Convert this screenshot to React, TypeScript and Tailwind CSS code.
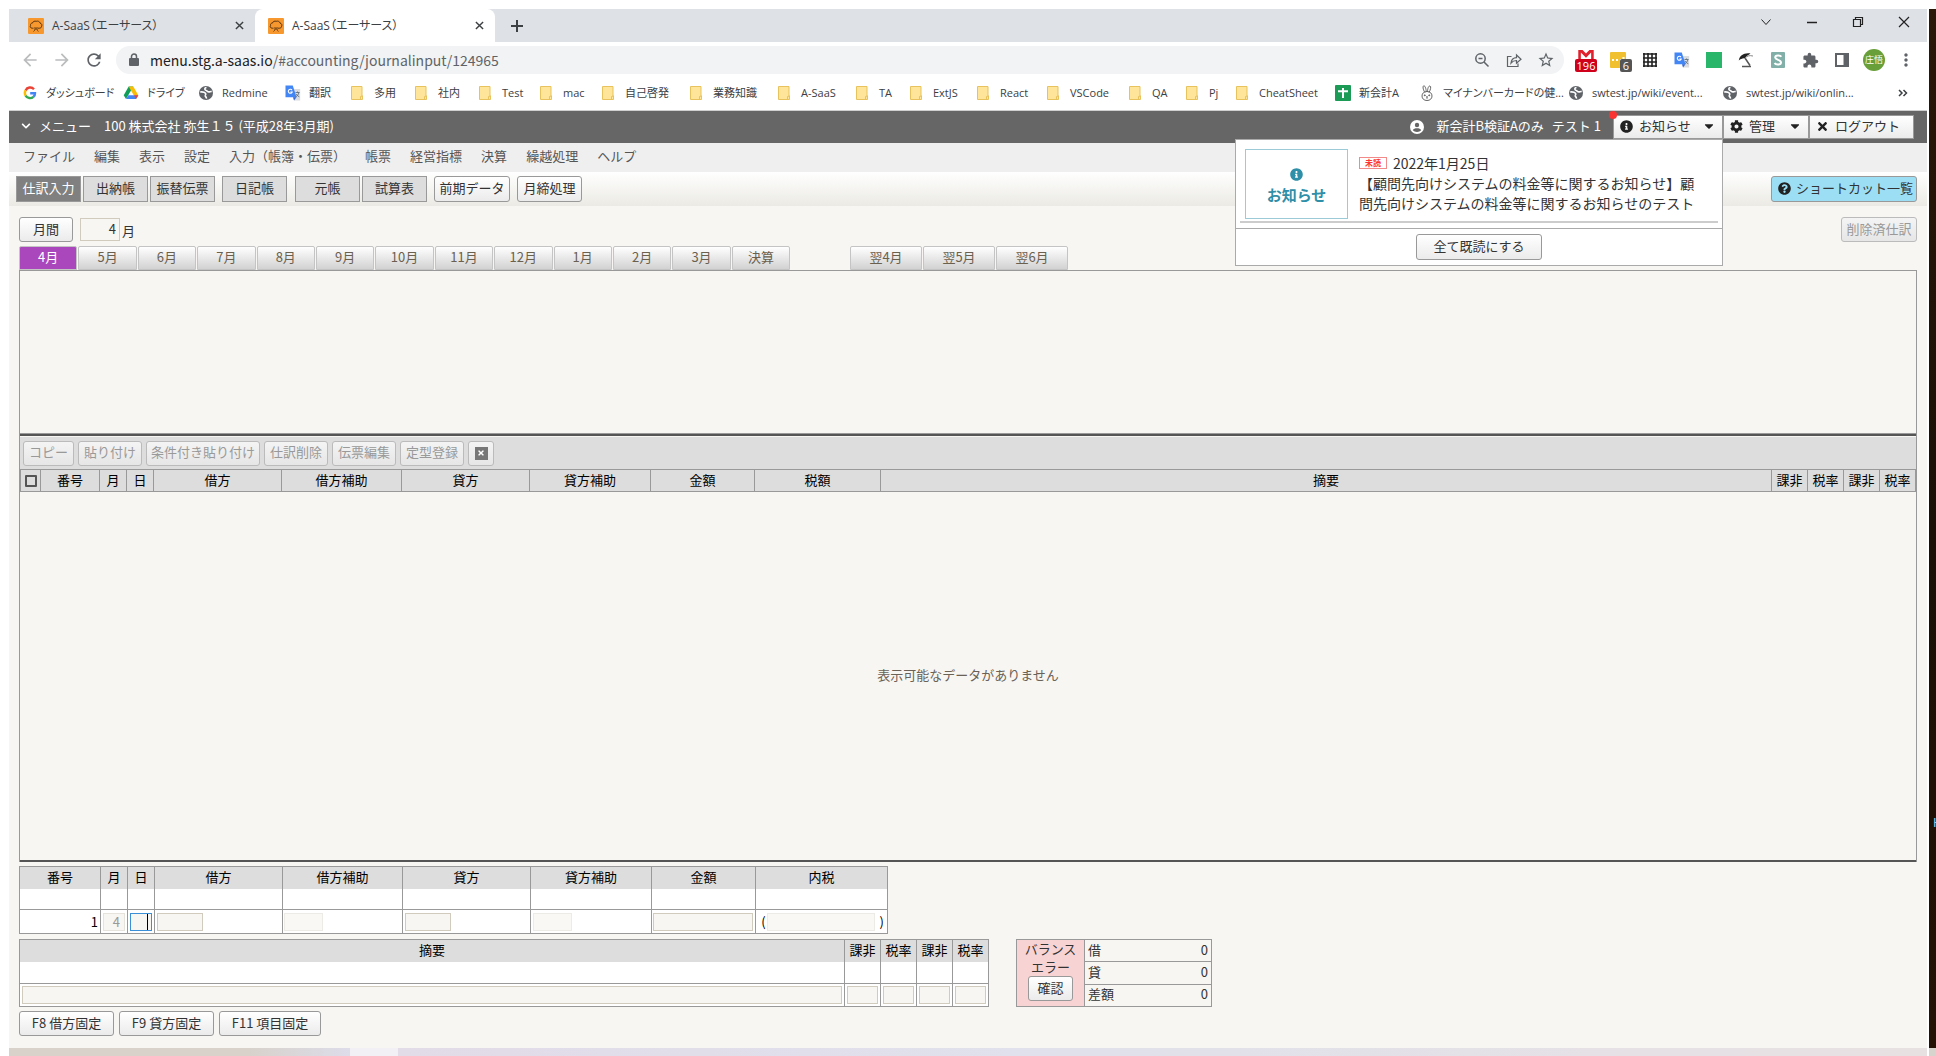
import type { ReactNode } from "react";
import { FaCaretDown, FaChevronDown, FaCog, FaInfoCircle, FaQuestionCircle, FaTimes } from "react-icons/fa";
import { MdArrowBack, MdArrowForward, MdMoreVert, MdRefresh, MdStarBorder } from "react-icons/md";

const appFont = "font-['Noto_Sans_CJK_JP',sans-serif]";
const chromeFont = "font-['Open_Sans','Noto_Sans_CJK_JP',sans-serif] [font-feature-settings:'palt']";

/* ---------- small drawings ---------- */

function TreeIcon() {
  return (
    <svg viewBox="0 0 16 16" className="size-4 shrink-0">
      <rect width="16" height="16" rx="1" fill="#f7982f" />
      <path d="M5.500 10.200H4.200C2.300 10.200 1.700 8.400 2.600 7.400 2.200 5.900 3.300 5 4.400 5.100 4.900 3.500 6.600 2.700 8.200 3.300 10 2.700 11.800 3.600 12 5.100c1.600.2 2.300 1.800 1.600 3.100.1 1.300-1 2-2.400 2H10" fill="none" stroke="#5a3510" strokeWidth="1" />
      <path d="M5.500 13.500c1.300-.8 1.600-2.300 1.500-4.500M10.300 13.500C9.200 12.500 9 11 9 9M7 11h2" fill="none" stroke="#5a3510" strokeWidth=".9" />
    </svg>
  );
}

function GoogleIcon() {
  return (
    <svg viewBox="0 0 16 16" className="size-4 shrink-0" fill="none" strokeWidth="2.4">
      <path d="M12 4.200A5.100 5.100 0 0 0 3.600 5.400" stroke="#ea4335" />
      <path d="M3.600 5.400a5.100 5.100 0 0 0 0 5.200" stroke="#fbbc05" />
      <path d="M3.600 10.600a5.100 5.100 0 0 0 7.800 1.200" stroke="#34a853" />
      <path d="M11.400 11.800A4.600 4.600 0 0 0 13 8.200H8.200" stroke="#4285f4" />
    </svg>
  );
}

function DriveIcon() {
  return (
    <svg viewBox="0 0 16 16" className="size-4 shrink-0">
      <path d="M5.700 1.500h4.600L8 5.500 3 14 .7 10.200z" fill="#0f9d58" />
      <path d="M5.700 1.500h4.600l5 8.700h-4.600z" fill="#fbbc05" />
      <path d="M5.300 10.200h10L13 14H3z" fill="#4285f4" />
      <path d="M12.900 10.200h2.400L13 14l-2-3.800z" fill="#ea4335" />
    </svg>
  );
}

function GlobeIcon() {
  return (
    <svg viewBox="0 0 16 16" className="size-4 shrink-0">
      <circle cx="8" cy="8" r="7" fill="#5f6368" />
      <path d="M8.500 2.500C6.500 2.800 6.300 4.600 7.800 5.200c1.500.5 1.500 1.800 3.200 1.700 1.100-.1 1.500-.6 2.700-.3M2.200 7c1.800-.2 4.200 0 5.300 1.200 1 1.200-.6 1.800-.2 2.900.4 1 1.300.9 1.100 2.600" fill="none" stroke="#fff" strokeWidth="1.600" />
    </svg>
  );
}

function TranslateIcon() {
  return (
    <svg viewBox="0 0 16 16" className="size-4 shrink-0">
      <path d="M6 4h9.200v11.500H9z" fill="#dadce0" />
      <path d="M.5.500h7.300l3.700 11.800H.500z" fill="#4285f4" />
      <path d="M8 12.300h3.500L9 15.500z" fill="#3367d6" />
      <path d="M7 5.200A2 2 0 1 0 7.200 7H5.400" fill="none" stroke="#fff" strokeWidth="1.100" />
      <path d="M10.500 7.500h4M12.500 6.500v1M13.800 7.500c-.3 2-1.300 3.300-3 4.300M11.300 9c.6 1.300 1.600 2.200 3 2.800" fill="none" stroke="#5f6f80" strokeWidth=".9" />
    </svg>
  );
}

function FolderIcon() {
  return (
    <svg viewBox="0 0 16 16" className="size-4 shrink-0">
      <path d="M1.500 1.500h10.500v9.500h.500v3.500H1.500z" fill="#fee599" stroke="#e8c25c" />
      <path d="M10.500 14.500v-3l2-.5" fill="none" stroke="#e8c25c" />
    </svg>
  );
}

function SheetIcon() {
  return (
    <svg viewBox="0 0 16 16" className="size-4 shrink-0">
      <rect width="16" height="16" rx="1" fill="#1c9b57" />
      <path d="M3 6.200h10M8 3v10" stroke="#fff" strokeWidth="2" />
    </svg>
  );
}

function RabbitIcon() {
  return (
    <svg viewBox="0 0 16 16" className="size-4 shrink-0" fill="none" stroke="#555" strokeWidth=".9">
      <path d="M6 7.500C4 5 3.400 1 4.800.800 6.300.700 7 4 7.300 6.500M8.500 6.500C8.600 3.500 9.500.700 11 1c1.400.3.500 4-1 6.500" />
      <path d="M8 6.500c3 0 5 1.800 5 4.500S11 15.500 8 15.500 3 13.700 3 11s2-4.500 5-4.500zM7 11.500l1 .8 1-.8M8 12.300v1.500" />
      <circle cx="5.800" cy="10.300" r=".5" fill="#555" />
      <circle cx="10.200" cy="10.300" r=".5" fill="#555" />
    </svg>
  );
}

function LockIcon() {
  return (
    <svg viewBox="0 0 12 14" className="h-[14px] w-3 shrink-0">
      <rect x="1" y="5" width="10" height="8" rx="1" fill="#5f6368" />
      <path d="M3.500 5.500V3.500a2.500 2.500 0 0 1 5 0v2" fill="none" stroke="#5f6368" strokeWidth="1.500" />
    </svg>
  );
}

function PuzzleIcon() {
  return (
    <svg viewBox="0 0 24 24" className="size-[17px]" fill="#5f6368">
      <path d="M20.500 11H19V7c0-1.100-.9-2-2-2h-4V3.500a2.500 2.500 0 0 0-5 0V5H4c-1.100 0-1.990.9-1.990 2v3.800H3.500c1.490 0 2.700 1.210 2.700 2.700s-1.210 2.700-2.700 2.700H2V20c0 1.100.9 2 2 2h3.800v-1.500c0-1.490 1.210-2.700 2.700-2.700s2.700 1.210 2.700 2.700V22H17c1.100 0 2-.9 2-2v-4h1.500a2.500 2.500 0 0 0 0-5z" />
    </svg>
  );
}

function UserIcon() {
  return (
    <svg viewBox="0 0 14 14" className="size-[14px]">
      <circle cx="7" cy="7" r="7" fill="#fff" />
      <circle cx="7" cy="5" r="2.200" fill="#666" />
      <path d="M2.800 10.300C3.500 8.800 5 8.300 7 8.300s3.500.5 4.200 2A5.500 5.500 0 0 1 7 12a5.500 5.500 0 0 1-4.200-1.700z" fill="#666" />
    </svg>
  );
}

/* ---------- browser ---------- */

const bookmarks: { label: string; icon: ReactNode; width: string }[] = [
  { label: "ダッシュボード", icon: <GoogleIcon />, width: "w-[101px]" },
  { label: "ドライブ", icon: <DriveIcon />, width: "w-[75px]" },
  { label: "Redmine", icon: <GlobeIcon />, width: "w-[87px]" },
  { label: "翻訳", icon: <TranslateIcon />, width: "w-[65px]" },
  { label: "多用", icon: <FolderIcon />, width: "w-16" },
  { label: "社内", icon: <FolderIcon />, width: "w-16" },
  { label: "Test", icon: <FolderIcon />, width: "w-[61px]" },
  { label: "mac", icon: <FolderIcon />, width: "w-[62px]" },
  { label: "自己啓発", icon: <FolderIcon />, width: "w-[88px]" },
  { label: "業務知識", icon: <FolderIcon />, width: "w-[88px]" },
  { label: "A-SaaS", icon: <FolderIcon />, width: "w-[78px]" },
  { label: "TA", icon: <FolderIcon />, width: "w-[54px]" },
  { label: "ExtJS", icon: <FolderIcon />, width: "w-[67px]" },
  { label: "React", icon: <FolderIcon />, width: "w-[70px]" },
  { label: "VSCode", icon: <FolderIcon />, width: "w-[82px]" },
  { label: "QA", icon: <FolderIcon />, width: "w-[57px]" },
  { label: "Pj", icon: <FolderIcon />, width: "w-[50px]" },
  { label: "CheatSheet", icon: <FolderIcon />, width: "w-[100px]" },
  { label: "新会計A", icon: <SheetIcon />, width: "w-[84px]" },
  { label: "マイナンバーカードの健...", icon: <RabbitIcon />, width: "w-[149px]" },
  { label: "swtest.jp/wiki/event...", icon: <GlobeIcon />, width: "w-[154px]" },
  { label: "swtest.jp/wiki/onlin...", icon: <GlobeIcon />, width: "w-[154px]" },
];

function BrowserTab({ active }: { active?: boolean }) {
  return (
    <div className={`flex h-full w-[240px] items-center pr-2 pl-[13px] ${active ? "rounded-t-lg bg-white" : ""}`}>
      <TreeIcon />
      <button className="ml-2 flex-1 text-left text-xs text-[#3c4043]">A-SaaS（エーサース）</button>
      <button aria-label="タブを閉じる" className="flex size-4 items-center justify-center">
        <svg viewBox="0 0 10 10" className="size-[9px]" stroke="#3c4043" strokeWidth="1.600"><path d="M1 1l8 8M9 1l-8 8" /></svg>
      </button>
    </div>
  );
}

function WindowButton({ label, children }: { label: string; children: ReactNode }) {
  return (
    <button aria-label={label} className="flex h-[26px] w-[46px] items-center justify-center">
      <svg viewBox="0 0 12 12" className="size-3" fill="none" stroke="#222">{children}</svg>
    </button>
  );
}

function ToolCell({ label, children }: { label: string; children: ReactNode }) {
  return (
    <button aria-label={label} className="relative flex h-7 w-8 items-center justify-center">
      {children}
    </button>
  );
}

function Browser() {
  return (
    <div className={chromeFont}>
      <div className="flex h-[33px] items-stretch bg-[#dee1e6]">
        <div className="flex pl-[6px]">
          <BrowserTab />
          <BrowserTab active />
        </div>
        <button aria-label="新しいタブ" className="ml-[14px] flex w-4 items-center justify-center">
          <svg viewBox="0 0 14 14" className="size-[14px]" stroke="#3c4043" strokeWidth="2"><path d="M7 1v12M1 7h12" /></svg>
        </button>
        <div className="ml-auto flex">
          <WindowButton label="タブを検索"><path d="M1.500 3.500L6 8.500l4.500-5" /></WindowButton>
          <WindowButton label="最小化"><path d="M1 6.500h10" strokeWidth="1.500" /></WindowButton>
          <WindowButton label="元に戻す"><path d="M1.500 3.500h7v7h-7zM3.500 3.500v-2h7v7h-2" strokeWidth="1.200" /></WindowButton>
          <WindowButton label="閉じる"><path d="M1 1l10 10M11 1L1 11" strokeWidth="1.200" /></WindowButton>
        </div>
      </div>

      <div className="flex h-9 items-center bg-white pl-[5px]">
        <ToolCell label="戻る"><MdArrowBack className="size-5 text-[#babcbe]" /></ToolCell>
        <ToolCell label="進む"><MdArrowForward className="size-5 text-[#babcbe]" /></ToolCell>
        <ToolCell label="再読み込み"><MdRefresh className="size-5 text-[#5f6368]" /></ToolCell>
        <div className="ml-[6px] flex h-7 flex-1 items-center rounded-full bg-[#f1f3f4] pr-[2px] pl-3">
          <LockIcon />
          <div className="ml-[10px] flex-1 font-['Noto_Sans_CJK_JP',sans-serif] text-sm text-[#5f6368]">
            <span className="text-[#202124]">menu.stg.a-saas.io</span>/#accounting/journalinput/124965
          </div>
          <ToolCell label="ズーム">
            <svg viewBox="0 0 16 16" className="size-4" fill="none" stroke="#5f6368" strokeWidth="1.500"><circle cx="6.500" cy="6.500" r="4.700" /><path d="M10 10l4.500 4.500M4.500 6.500h4" /></svg>
          </ToolCell>
          <ToolCell label="共有">
            <svg viewBox="0 0 16 16" className="size-4" fill="none" stroke="#5f6368" strokeWidth="1.200"><path d="M5.500 4.500H1.500v10h10.500v-3M5 11c.5-3.500 2.500-5.200 5.500-5.300V3l4.500 4.200-4.500 4V8.500C8 8.500 6.500 9.200 5 11z" /></svg>
          </ToolCell>
          <ToolCell label="ブックマーク"><MdStarBorder className="size-[18px] text-[#5f6368]" /></ToolCell>
        </div>
        <div className="flex pr-[5px] pl-[6px]">
          <ToolCell label="Gmail">
            <svg viewBox="0 0 18 14" className="absolute top-1 left-2 h-3 w-4"><rect width="18" height="14" fill="#e0202c" /><path d="M3 14V3l6 6 6-6v11zM5 0h8L9 4z" fill="#fff" /></svg>
            <span className="absolute top-[13px] left-[5px] h-[13px] w-[22px] rounded-[2px] bg-[#d0021b] text-center text-[11px] leading-[13px] text-white">196</span>
          </ToolCell>
          <ToolCell label="メモ">
            <svg viewBox="0 0 16 16" className="size-4"><rect width="16" height="16" rx="1" fill="#f0c030" /><path d="M2 8h2M6 8h2M10 8h2M13.500 5v4" stroke="#fff" strokeWidth="2" /></svg>
            <span className="absolute top-[13px] left-[18px] h-[13px] w-3 rounded-[2px] bg-[#555] text-center text-[11px] leading-[13px] text-white">6</span>
          </ToolCell>
          <ToolCell label="グリッド">
            <svg viewBox="0 0 14 14" className="size-[14px]"><rect width="14" height="14" rx="1" fill="#fff" /><path d="M1 0v14M5 0v14M9 0v14M13 0v14M0 1h14M0 5h14M0 9h14M0 13h14" stroke="#222" strokeWidth="1.600" /></svg>
          </ToolCell>
          <ToolCell label="翻訳"><TranslateIcon /></ToolCell>
          <ToolCell label="緑の拡張機能"><span className="size-4 bg-[#29b66b]" /></ToolCell>
          <ToolCell label="傘">
            <svg viewBox="0 0 16 16" className="size-4"><path d="M.8 8.500C1.500 3.500 6 .5 12.500 1.500 10 3 8 4.500 7 6.300 5 5.800 2.500 6.800.800 8.500z" fill="#222" /><path d="M7 6l5 7.500M4 14.500h9" stroke="#555" strokeWidth="1.500" /><path d="M7 6.300C9 4 11 3 15 4" stroke="#888" fill="none" /></svg>
          </ToolCell>
          <ToolCell label="S">
            <svg viewBox="0 0 14 16" className="h-4 w-[14px]"><rect width="14" height="16" rx="1" fill="#82b0a8" /><path d="M10.300 4.800C9.300 3 4.200 3 4.200 5.500S10 7.700 10 10.400 4.600 13 3.600 11" fill="none" stroke="#fff" strokeWidth="2" /></svg>
          </ToolCell>
          <ToolCell label="拡張機能"><PuzzleIcon /></ToolCell>
          <ToolCell label="サイドパネル">
            <svg viewBox="0 0 14 14" className="size-[14px]"><path d="M1 1h12v12H1z" fill="none" stroke="#5f6368" strokeWidth="2" /><path d="M8.500 1H13v12H8.500z" fill="#5f6368" /></svg>
          </ToolCell>
          <ToolCell label="プロフィール">
            <span className="size-[22px] rounded-full bg-[#689f38] text-center text-[9px] leading-[22px] text-white">庄悟</span>
          </ToolCell>
          <ToolCell label="設定"><MdMoreVert className="size-5 text-[#5f6368]" /></ToolCell>
        </div>
      </div>

      <nav className="flex h-[33px] items-center border-b border-[#d0d0d0] bg-white pr-4 pb-[2px] pl-[13px] text-[11px] text-[#3c4043]">
        {bookmarks.map((b) => (
          <a key={b.label} href="#" className={`flex shrink-0 items-center gap-2 whitespace-nowrap ${b.width}`}>
            {b.icon}
            {b.label}
          </a>
        ))}
        <button aria-label="その他のブックマーク" className="ml-auto flex size-4 items-center justify-center">
          <svg viewBox="0 0 10 8" className="h-2 w-[10px]" fill="none" stroke="#3c4043" strokeWidth="1.500"><path d="M1 1l3 3-3 3M5.500 1l3 3-3 3" /></svg>
        </button>
      </nav>
    </div>
  );
}

/* ---------- application ---------- */

const raised = "border border-[#999] bg-linear-to-b from-white to-[#ebebeb] text-[#333] whitespace-nowrap pb-[2px]";
const disabledLook = "border border-[#bbb] bg-linear-to-b from-[#f4f4f4] to-[#e6e6e6] text-[#999] whitespace-nowrap rounded-[3px]";

function TopMenuButton({ icon, label, caret, className }: { icon: ReactNode; label: string; caret?: boolean; className: string }) {
  return (
    <button className={`flex h-6 items-center ${raised} px-[6px] ${className}`}>
      {icon}
      <span className="ml-[6px]">{label}</span>
      {caret && <FaCaretDown className="ml-auto size-[14px] text-[#222]" />}
    </button>
  );
}

function NoticePopup() {
  return (
    <section aria-label="お知らせ" className="absolute top-6 right-0 z-10 w-[488px] border border-[#aaa] bg-white text-[#333]">
      <div className="mx-1 mt-[9px] mb-[5px] flex border-b-2 border-[#ccc] pb-[2px] pl-[5px]">
        <div className="flex h-[70px] w-[103px] shrink-0 flex-col items-center justify-center border border-[#9ccad6] pt-1 font-bold text-[#2f8fa8]">
          <FaInfoCircle className="size-[13px]" />
          <span className="mt-1 text-[15px] leading-5">お知らせ</span>
        </div>
        <div className="ml-[11px] w-[348px] text-sm leading-5">
          <p className="mt-1 flex items-center">
            <span className="mr-[6px] w-7 border border-[#f28a8a] text-center text-[8px] leading-[10px] font-bold text-[#f33]">未読</span>
            2022年1月25日
          </p>
          <p>【顧問先向けシステムの料金等に関するお知らせ】顧問先向けシステムの料金等に関するお知らせのテスト</p>
        </div>
      </div>
      <div className="flex justify-center border-t border-[#aaa] py-[5px]">
        <button className={`h-[26px] w-[126px] rounded-[3px] ${raised}`}>全て既読にする</button>
      </div>
    </section>
  );
}

function AppHeader() {
  return (
    <header className="flex h-8 items-center bg-[#666] pr-[13px] pl-3 text-white">
      <button className="flex items-center gap-2 pb-[2px]">
        <FaChevronDown className="size-[10px]" />
        メニュー
      </button>
      <h1 className="ml-[13px] pb-[2px]">100 株式会社 弥生１５ (平成28年3月期)</h1>
      <div className="ml-auto flex items-center">
        <UserIcon />
        <span className="ml-3 pb-[2px]">新会計B検証Aのみ</span>
        <span className="ml-2 mr-3 pb-[2px]">テスト 1</span>
        <div className="relative">
          <TopMenuButton icon={<FaInfoCircle className="size-[13px] text-[#222]" />} label="お知らせ" caret className="w-[110px]" />
          <span className="absolute -top-1 -left-1 size-2 rounded-full bg-[#fa3333]" />
          <NoticePopup />
        </div>
        <TopMenuButton icon={<FaCog className="size-[13px] text-[#222]" />} label="管理" caret className="w-[86px]" />
        <TopMenuButton icon={<FaTimes className="size-[13px] text-[#222]" />} label="ログアウト" className="w-[105px]" />
      </div>
    </header>
  );
}

const menus = ["ファイル", "編集", "表示", "設定", "入力（帳簿・伝票）", "帳票", "経営指標", "決算", "繰越処理", "ヘルプ"];

const flatButton = "h-[26px] w-[65px] border border-[#999] whitespace-nowrap pb-[2px]";

function Toolbar() {
  return (
    <div className="flex h-[34px] items-center bg-linear-to-b from-white to-[#ebeae4] pr-[10px] pl-[7px] text-[#333]">
      <div className="flex gap-[2px]">
        <button className={`${flatButton} bg-[#808080] text-white`}>仕訳入力</button>
        <button className={`${flatButton} bg-[#ddd]`}>出納帳</button>
        <button className={`${flatButton} bg-[#ddd]`}>振替伝票</button>
      </div>
      <button className={`${flatButton} ml-[7px] bg-[#ddd]`}>日記帳</button>
      <div className="ml-2 flex gap-[2px]">
        <button className={`${flatButton} bg-[#ddd]`}>元帳</button>
        <button className={`${flatButton} bg-[#ddd]`}>試算表</button>
      </div>
      <button className={`ml-[7px] h-[26px] w-[76px] rounded-[3px] ${raised}`}>前期データ</button>
      <button className={`ml-[7px] h-[26px] w-[65px] rounded-[3px] ${raised}`}>月締処理</button>
      <button className="ml-auto flex h-[26px] w-[146px] items-center gap-[5px] rounded-[3px] border border-[#999] bg-[#9cdff5] pb-[2px] pl-[6px] whitespace-nowrap">
        <FaQuestionCircle className="size-[13px] shrink-0 text-[#222]" />
        ショートカット一覧
      </button>
    </div>
  );
}

const months = ["4月", "5月", "6月", "7月", "8月", "9月", "10月", "11月", "12月", "1月", "2月", "3月", "決算"];
const monthTab = "h-6 rounded-t-[2px] border border-[#c4c4c4] pb-[2px] text-center";
const monthIdle = "bg-linear-to-b from-white to-[#d2d2d2] text-[#6b5f4e]";

function MonthTabs() {
  return (
    <div role="tablist" className="mt-1 flex">
      <div className="flex w-[771px] gap-px">
        {months.map((m, i) => (
          <button key={m} role="tab" aria-selected={i === 0} className={`min-w-0 flex-1 ${monthTab} ${i === 0 ? "bg-[#ab47bc] text-white" : monthIdle}`}>
            {m}
          </button>
        ))}
      </div>
      <div className="ml-[60px] flex gap-px">
        {["翌4月", "翌5月", "翌6月"].map((m) => (
          <button key={m} role="tab" aria-selected={false} className={`w-[72px] ${monthTab} ${monthIdle}`}>{m}</button>
        ))}
      </div>
    </div>
  );
}

const gridActions = [
  { label: "コピー", width: "w-[51px]" },
  { label: "貼り付け", width: "w-16" },
  { label: "条件付き貼り付け", width: "w-[114px]" },
  { label: "仕訳削除", width: "w-16" },
  { label: "伝票編集", width: "w-16" },
  { label: "定型登録", width: "w-16" },
];

const gridColumns = [
  { label: "番号", width: "w-[59px]" },
  { label: "月", width: "w-[27px]" },
  { label: "日", width: "w-[27px]" },
  { label: "借方", width: "w-[128px]" },
  { label: "借方補助", width: "w-[120px]" },
  { label: "貸方", width: "w-[128px]" },
  { label: "貸方補助", width: "w-[121px]" },
  { label: "金額", width: "w-[104px]" },
  { label: "税額", width: "w-[126px]" },
  { label: "摘要", width: "" },
  { label: "課非", width: "w-9" },
  { label: "税率", width: "w-9" },
  { label: "課非", width: "w-9" },
  { label: "税率", width: "w-9" },
];

const heading = "border-[#999] p-0 pb-[2px] leading-[18px] font-normal whitespace-nowrap";

function JournalGrid() {
  return (
    <div className="flex flex-1 flex-col border-x border-[#999]">
      <div className="h-[164px] border-y border-[#999]" />
      <div className="h-[2px] bg-[#555]" />
      <div className="mt-px flex h-8 items-center gap-1 bg-[#ddd] pl-[3px]">
        {gridActions.map((a) => (
          <button key={a.label} disabled className={`h-[25px] pb-[2px] ${disabledLook} ${a.width}`}>{a.label}</button>
        ))}
        <button disabled aria-label="閉じる" className={`flex h-[25px] w-[26px] items-center justify-center ${disabledLook}`}>
          <span className="flex size-[13px] items-center justify-center bg-[#777] text-white"><FaTimes className="size-2" /></span>
        </button>
      </div>
      <table className="w-full table-fixed border-collapse bg-[#ddd] text-black">
        <thead>
          <tr className="h-[22px]">
            <th className="w-5 border border-[#999] p-0">
              <input type="checkbox" aria-label="すべて選択" className="mx-auto block size-3 appearance-none rounded-[1px] border-2 border-[#555]" />
            </th>
            {gridColumns.map((c, i) => (
              <th key={i} className={`border ${heading} ${c.width}`}>{c.label}</th>
            ))}
          </tr>
        </thead>
      </table>
      <div className="flex flex-1 items-center justify-center border-b-2 border-[#555] pb-[2px] text-[#6b6257]">表示可能なデータがありません</div>
    </div>
  );
}

const field = "block h-[18px] border bg-[#f7f6f2] px-1 text-right outline-none";
const fieldOn = "border-[#d0cbbd]";
const fieldOff = "border-[#e6e3dc] text-[#999]";
const cell = "border border-[#999] p-0";

function EntryTable() {
  return (
    <table className="mt-1 w-[869px] table-fixed border-collapse bg-white text-black">
      <thead>
        <tr className="h-[22px] bg-[#ddd]">
          {[
            ["番号", "w-[81px]"],
            ["月", "w-[27px]"],
            ["日", "w-[27px]"],
            ["借方", "w-[128px]"],
            ["借方補助", "w-[120px]"],
            ["貸方", "w-[128px]"],
            ["貸方補助", "w-[121px]"],
            ["金額", "w-[104px]"],
            ["内税", "w-[132px]"],
          ].map(([label, width]) => (
            <th key={label} className={`border border-b-0 ${heading} ${width}`}>{label}</th>
          ))}
        </tr>
      </thead>
      <tbody>
        <tr className="h-[21px]">
          {Array.from({ length: 9 }, (_, i) => <td key={i} className="border border-t-0 border-[#999] p-0" />)}
        </tr>
        <tr className="h-6">
          <td className={`${cell} pr-[2px] text-right leading-5`}>1</td>
          <td className={cell}><input aria-label="月" disabled defaultValue="4" className={`${field} ${fieldOff} mx-auto w-[22px]`} /></td>
          <td className={cell}>
            <div className="mx-auto flex h-[18px] w-[22px] items-center justify-end border border-[#3b8fd6] bg-[#f7f6f2] pr-[3px]">
              <input aria-label="日" className="h-4 w-3 min-w-0 border-r border-black bg-transparent outline-none" />
            </div>
          </td>
          <td className={cell}><input aria-label="借方" className={`${field} ${fieldOn} ml-[2px] w-[46px]`} /></td>
          <td className={cell}><input aria-label="借方補助" disabled className={`${field} ${fieldOff} ml-px w-[39px] opacity-70`} /></td>
          <td className={cell}><input aria-label="貸方" className={`${field} ${fieldOn} ml-[2px] w-[46px]`} /></td>
          <td className={cell}><input aria-label="貸方補助" disabled className={`${field} ${fieldOff} ml-[2px] w-[39px] opacity-70`} /></td>
          <td className={cell}><input aria-label="金額" className={`${field} ${fieldOn} ml-px w-[100px]`} /></td>
          <td className={cell}>
            <div className="flex items-center justify-end gap-px pr-[3px] leading-5">
              (<input aria-label="内税" disabled className={`${field} ${fieldOff} mr-1 w-[108px] opacity-70`} />)
            </div>
          </td>
        </tr>
      </tbody>
    </table>
  );
}

function SummaryTable() {
  return (
    <table className="w-[970px] table-fixed border-collapse bg-white text-black">
      <thead>
        <tr className="h-[22px] bg-[#ddd]">
          <th className={`border border-b-0 ${heading}`}>摘要</th>
          {["課非", "税率", "課非", "税率"].map((label, i) => (
            <th key={i} className={`w-9 border border-b-0 ${heading}`}>{label}</th>
          ))}
        </tr>
      </thead>
      <tbody>
        <tr className="h-[22px]">
          {Array.from({ length: 5 }, (_, i) => <td key={i} className="border border-t-0 border-[#999] p-0" />)}
        </tr>
        <tr className="h-[23px]">
          <td className={`${cell} px-[2px]`}><input aria-label="摘要" className={`${field} ${fieldOn} w-full`} /></td>
          {["借方課非", "借方税率", "貸方課非", "貸方税率"].map((label) => (
            <td key={label} className={`${cell} px-[2px]`}><input aria-label={label} className={`${field} ${fieldOn} w-full`} /></td>
          ))}
        </tr>
      </tbody>
    </table>
  );
}

function BalancePanel() {
  return (
    <div className="ml-[27px] flex h-[68px] w-[196px] border border-[#999] text-[#333]">
      <div className="flex w-[68px] flex-col items-center border-r border-[#999] bg-[#f8d3d3] leading-[18px]">
        <span>バランス</span>
        <span>エラー</span>
        <button className={`h-[25px] w-[45px] rounded-[3px] ${raised}`}>確認</button>
      </div>
      <dl className="flex flex-1 flex-col divide-y divide-[#999] leading-[18px]">
        {["借", "貸", "差額"].map((label) => (
          <div key={label} className="flex flex-1 items-center justify-between px-[3px] pb-[2px]">
            <dt>{label}</dt>
            <dd>0</dd>
          </div>
        ))}
      </dl>
    </div>
  );
}

function JournalInput() {
  return (
    <main className="flex flex-1 flex-col bg-[#f7f6f2] px-[10px] pt-[11px] pb-3 text-[#333]">
      <div className="flex items-start">
        <button className={`h-[25px] w-[54px] rounded-[3px] ${raised}`}>月間</button>
        <label className="ml-[7px] flex items-end">
          <input defaultValue="4" className="mt-px h-[23px] w-10 border border-[#d0cbbd] bg-transparent px-[3px] pb-[2px] text-right outline-none" />
          <span className="ml-[2px] leading-5">月</span>
        </label>
        <button disabled className={`ml-auto h-[25px] w-[76px] pb-[2px] ${disabledLook}`}>削除済仕訳</button>
      </div>
      <MonthTabs />
      <JournalGrid />
      <EntryTable />
      <div className="mt-[5px] flex">
        <SummaryTable />
        <BalancePanel />
      </div>
      <div className="mt-1 flex gap-[5px]">
        <button className={`h-[25px] w-[95px] rounded-[3px] ${raised}`}>F8 借方固定</button>
        <button className={`h-[25px] w-[95px] rounded-[3px] ${raised}`}>F9 貸方固定</button>
        <button className={`h-[25px] w-[102px] rounded-[3px] ${raised}`}>F11 項目固定</button>
      </div>
    </main>
  );
}

export default function App() {
  return (
    <div className={`flex min-h-screen flex-col bg-white pt-[9px] pl-[9px] text-[13px] ${appFont}`}>
      <div className="flex flex-1">
        <div className="mr-[2px] flex min-w-0 flex-1 flex-col">
          <Browser />
          <AppHeader />
          <nav className="flex h-[29px] items-center gap-[19px] bg-[#efefef] pb-1 pl-[14px] text-[#555]">
            {menus.map((m) => <button key={m} className="whitespace-nowrap">{m}</button>)}
          </nav>
          <Toolbar />
          <JournalInput />
        </div>
        <div className="relative w-[7px] overflow-hidden bg-linear-to-b from-[#2a1809] via-[#1a1006] to-[#241205]">
          <span className="absolute bottom-[218px] left-1 text-xs leading-4 text-[#7fd8f5]">H</span>
        </div>
      </div>
      <div className="flex h-2">
        <div className="w-[341px] bg-linear-to-r from-[#d8d2cb] from-70% to-[#dddce9]" />
        <div className="w-12 bg-[#f2f0f5]" />
        <div className="flex-1 bg-linear-to-r from-[#e2dbe8] via-[#e0e1ec] via-40% to-[#e8e1e2]" />
        <div className="ml-[2px] w-[7px] bg-[#d6d4cd]" />
      </div>
    </div>
  );
}
